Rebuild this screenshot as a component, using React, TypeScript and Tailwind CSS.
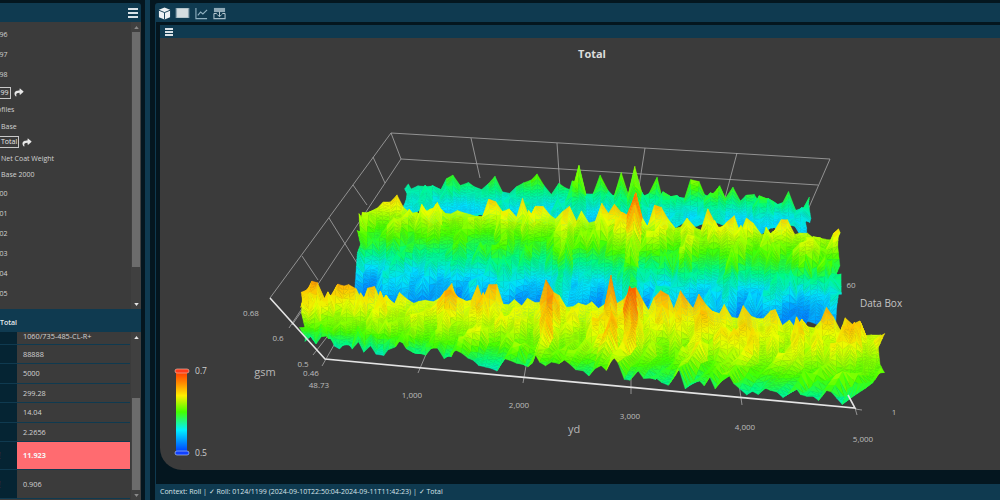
import { ReactNode } from "react";
import { FaShare } from "react-icons/fa";

// tiny seeded random so the mesh is the same on every render
function makeRandom(seed: number) {
  let s = seed;
  return () => {
    s = (s + 0x6d2b79f5) | 0;
    let t = Math.imul(s ^ (s >>> 15), 1 | s);
    t = (t + Math.imul(t ^ (t >>> 7), 61 | t)) ^ t;
    return ((t ^ (t >>> 14)) >>> 0) / 4294967296;
  };
}

const COLOR_STOPS: [number, number[]][] = [
  [0, [0, 60, 255]],
  [0.16, [0, 140, 255]],
  [0.26, [0, 225, 255]],
  [0.38, [0, 250, 130]],
  [0.48, [70, 255, 0]],
  [0.64, [235, 255, 0]],
  [0.76, [255, 190, 0]],
  [0.88, [250, 110, 0]],
  [1, [255, 40, 0]],
];

function valueColor(value: number) {
  const t = Math.min(1, Math.max(0, (value - 0.5) / 0.2));
  for (let i = 1; i < COLOR_STOPS.length; i++) {
    const [p1, c1] = COLOR_STOPS[i];
    if (t <= p1) {
      const [p0, c0] = COLOR_STOPS[i - 1];
      const k = (t - p0) / (p1 - p0);
      return `rgb(${c0.map((c, n) => Math.round(c + (c1[n] - c) * k)).join(",")})`;
    }
  }
  return "rgb(255,40,0)";
}

// [xLeft, yLeft, xRight, yRight, bow, base value, noise]
type Row = [number, number, number, number, number, number, number];

const BACK_BAND: Row[] = [
  [405, 184, 810, 207, -3, 0.575, 0.02],
  [405, 200, 808, 218, 0, 0.558, 0.018],
  [405, 220, 808, 234, 0, 0.548, 0.012],
];
const MIDDLE_BAND: Row[] = [
  [364, 207, 840, 237, -3, 0.622, 0.02],
  [362, 224, 840, 254, -2, 0.602, 0.021],
  [360, 248, 838, 276, 0, 0.578, 0.022],
  [357, 274, 837, 298, 2, 0.545, 0.02],
  [354, 306, 835, 326, 4, 0.528, 0.014],
];
const FRONT_BAND: Row[] = [
  [305, 298, 878, 338, -15, 0.63, 0.021],
  [302, 310, 882, 354, -7, 0.62, 0.021],
  [301, 324, 882, 374, 1, 0.604, 0.02],
  [304, 340, 849, 398, 6, 0.574, 0.02],
];

// sharp ridges running through the depth of the surface
const RIDGES: [number, number, number][] = [
  [0.57, 0.007, 0.062],
  [0.425, 0.007, 0.055],
  [0.535, 0.007, 0.034],
  [0.3, 0.008, 0.02],
  [0.77, 0.008, 0.024],
  [0.68, 0.008, 0.02],
];

function ridgeAt(u: number) {
  return RIDGES.reduce(
    (sum, [c, w, a]) => sum + a * Math.exp(-((u - c) * (u - c)) / (2 * w * w)),
    0
  );
}

interface Tri {
  points: string;
  fill: string;
}

interface Vert {
  x: number;
  y: number;
  v: number;
}

function lerpVert(a: Vert, b: Vert, k: number): Vert {
  return { x: a.x + (b.x - a.x) * k, y: a.y + (b.y - a.y) * k, v: a.v + (b.v - a.v) * k };
}

function buildBand(rows: Row[], seed: number, columns: number, ridgeScale: number) {
  const random = makeRandom(seed);
  const perSegment = 3;
  const rowCount = (rows.length - 1) * perSegment + 1;
  // noise stays alike over a few rows, which pulls the facets into long shards
  const grid: number[][] = [];
  const coarse = Math.ceil(rowCount / 2) + 2;
  for (let i = 0; i <= columns + rowCount; i++) {
    const column: number[] = [];
    for (let k = 0; k < coarse; k++) {
      const r = random();
      column.push(Math.pow(r, 2.2) * 2.9 - 0.62);
    }
    grid.push(column);
  }

  const verts: Vert[][] = [];
  for (let j = 0; j < rowCount; j++) {
    const pos = j / perSegment;
    const seg = Math.min(rows.length - 2, Math.floor(pos));
    const f = pos - seg;
    const a = rows[seg];
    const b = rows[seg + 1];
    const mix = (n: number) => a[n] + (b[n] - a[n]) * f;
    const k0 = Math.floor(j / 2);
    const kf = j / 2 - k0;
    const line: Vert[] = [];
    for (let i = 0; i <= columns; i++) {
      const u = i / columns;
      const column = grid[i + Math.floor(j * 0.5)];
      const n = column[k0] * (1 - kf) + column[k0 + 1] * kf + (random() - 0.5) * 0.2;
      const ridge = ridgeAt(u) * ridgeScale * (0.8 + 0.2 * (1 - j / rowCount));
      const lift = Math.min(n * mix(6) + ridge, 0.085) * 400;
      const edge = i === 0 || i === columns ? (random() - 0.5) * 8 : 0;
      line.push({
        x: mix(0) + (mix(2) - mix(0)) * u + (random() - 0.5) * 2 + edge,
        y:
          mix(1) +
          (mix(3) - mix(1)) * u +
          mix(4) * Math.sin(Math.PI * Math.min(1, u * 0.86)) -
          lift,
        v: mix(5) + n * mix(6) * 0.8 + ridge * 0.95,
      });
    }
    verts.push(line);
  }

  // each coarse quad is cut in strips, so the colour runs down a facet
  const strips = 3;
  const tris: Tri[] = [];
  const pt = (p: Vert) => `${p.x.toFixed(1)},${p.y.toFixed(1)}`;
  for (let j = 0; j < rowCount - 1; j++) {
    for (let s = 0; s < strips; s++) {
      for (let i = 0; i < columns; i++) {
        const p00 = lerpVert(verts[j][i], verts[j + 1][i], s / strips);
        const p10 = lerpVert(verts[j][i + 1], verts[j + 1][i + 1], s / strips);
        const p01 = lerpVert(verts[j][i], verts[j + 1][i], (s + 1) / strips);
        const p11 = lerpVert(verts[j][i + 1], verts[j + 1][i + 1], (s + 1) / strips);
        tris.push({
          points: `${pt(p00)} ${pt(p10)} ${pt(p01)}`,
          fill: valueColor((p00.v + p10.v + p01.v) / 3),
        });
        tris.push({
          points: `${pt(p10)} ${pt(p11)} ${pt(p01)}`,
          fill: valueColor((p10.v + p11.v + p01.v) / 3),
        });
      }
    }
  }
  return tris;
}

const MESH: Tri[] = [
  ...buildBand(BACK_BAND, 11, 58, 0.8),
  ...buildBand(MIDDLE_BAND, 23, 72, 1),
  ...buildBand(FRONT_BAND, 37, 90, 1),
];

const THIN_LINES = [
  "391,133 830,159",
  "391,133 270,298",
  "391,133 401,159",
  "401,159 818,185",
  "830,159 807,212",
  "401,159 289,328",
  "471,138 480,178",
  "557,143 560,188",
  "645,148 638,193",
  "737,153 725,198",
  "373,157 385,183",
  "353,185 367,205",
  "329,218 360,268",
  "302,256 318,280",
  "308,302 292,325",
  "330,333 313,355",
  "338,338 322,366",
  "430,345 418,373",
  "528,355 523,383",
  "631,363 631,394",
  "738,377 742,405",
  "855,408 857,415",
  "855,409 862,410",
];

const CHART_LABELS: [string, number, number][] = [
  ["0.68", 251, 316],
  ["0.6", 278, 341],
  ["0.5", 303, 367],
  ["0.46", 311, 376],
  ["48.73", 319, 388],
  ["1,000", 412, 398],
  ["2,000", 519, 408],
  ["3,000", 630, 419],
  ["4,000", 745, 430],
  ["5,000", 863, 442],
  ["1", 894, 415],
  ["60", 851, 288],
];

function SurfaceChart() {
  return (
    <svg viewBox="160 38 840 432" className="block w-[840px] h-[432px]">
      <defs>
        <linearGradient id="legend" x1="0" y1="0" x2="0" y2="1">
          <stop offset="0" stopColor="#ff3300" />
          <stop offset="0.15" stopColor="#ff8c00" />
          <stop offset="0.3" stopColor="#ffee00" />
          <stop offset="0.5" stopColor="#44ff00" />
          <stop offset="0.72" stopColor="#00f0ff" />
          <stop offset="1" stopColor="#0033ff" />
        </linearGradient>
      </defs>
      <text x="592" y="58" textAnchor="middle" fontSize="11" fontWeight="700" fill="#dcdcdc">
        Total
      </text>
      {THIN_LINES.map((points) => (
        <polyline key={points} points={points} fill="none" stroke="#a8a8a8" strokeWidth="0.8" />
      ))}
      <g className="blur-[0.6px]">
        {MESH.map((tri, i) => (
          <polygon key={i} points={tri.points} fill={tri.fill} stroke={tri.fill} strokeWidth="0.35" />
        ))}
      </g>
      <polyline
        points="270,298 325,359 855,408 848,395"
        fill="none"
        stroke="#e4e4e4"
        strokeWidth="1.6"
      />
      {CHART_LABELS.map(([label, x, y]) => (
        <text key={label} x={x} y={y} textAnchor="middle" fontSize="8" fill="#bdbdbd">
          {label}
        </text>
      ))}
      <text x="265" y="376" textAnchor="middle" fontSize="11" fill="#b8b8b8">
        gsm
      </text>
      <text x="574" y="433" textAnchor="middle" fontSize="11" fill="#b8b8b8">
        yd
      </text>
      <text x="881" y="307" textAnchor="middle" fontSize="10" fill="#c4c4c4">
        Data Box
      </text>
      <rect x="176" y="371" width="11" height="82" fill="url(#legend)" />
      <rect x="175" y="369" width="14" height="4" rx="2" fill="#ff3b1a" stroke="#e8b0a0" strokeWidth="0.7" />
      <rect x="175" y="451" width="14" height="4" rx="2" fill="#1040ff" stroke="#a8c0f0" strokeWidth="0.7" />
      <text x="201" y="374" textAnchor="middle" fontSize="8.5" fill="#cfcfcf">
        0.7
      </text>
      <text x="201" y="456" textAnchor="middle" fontSize="8.5" fill="#cfcfcf">
        0.5
      </text>
    </svg>
  );
}

function Hamburger({ className }: { className: string }) {
  return (
    <div className={`flex flex-col justify-between ${className}`}>
      <span className="block h-[2px] bg-[#d9e2e7]" />
      <span className="block h-[2px] bg-[#d9e2e7]" />
      <span className="block h-[2px] bg-[#d9e2e7]" />
    </div>
  );
}

function Arrow({ up, light }: { up?: boolean; light?: boolean }) {
  return (
    <div className="h-[10px] flex items-center justify-center shrink-0">
      <svg viewBox="0 0 6 4" className="w-[5px] h-[3px]">
        <polygon
          points={up ? "0,4 6,4 3,0" : "0,0 6,0 3,4"}
          fill={light ? "#e6e6e6" : "#8a8a8a"}
        />
      </svg>
    </div>
  );
}

const TREE_ROWS: {
  text: string;
  height: string;
  shift: string;
  boxed?: boolean;
}[] = [
  { text: "0124/1196", height: "h-[20px]", shift: "-ml-[27px]" },
  { text: "0124/1197", height: "h-[20px]", shift: "-ml-[27px]" },
  { text: "0124/1198", height: "h-[20px]", shift: "-ml-[27px]" },
  { text: "0124/1199", height: "h-[17px]", shift: "-ml-[28px]", boxed: true },
  { text: "Profiles", height: "h-[17px]", shift: "-ml-[10px]" },
  { text: "Base", height: "h-[16px]", shift: "ml-[1px]" },
  { text: "Total", height: "h-[16px]", shift: "-ml-[1px]", boxed: true },
  { text: "Net Coat Weight", height: "h-[16px]", shift: "ml-[1px]" },
  { text: "Base 2000", height: "h-[17px]", shift: "ml-[1px]" },
  { text: "0125/1200", height: "h-[20px]", shift: "-ml-[27px]" },
  { text: "0125/1201", height: "h-[20px]", shift: "-ml-[27px]" },
  { text: "0125/1202", height: "h-[20px]", shift: "-ml-[27px]" },
  { text: "0125/1203", height: "h-[20px]", shift: "-ml-[27px]" },
  { text: "0125/1204", height: "h-[20px]", shift: "-ml-[27px]" },
  { text: "0125/1205", height: "h-[20px]", shift: "-ml-[27px]" },
];

const TABLE_ROWS: { value: string; height: string; align: string; alert?: boolean; warn?: boolean }[] = [
  { value: "1060/735-485-CL-R+", height: "h-[13px]", align: "items-start" },
  { value: "88888", height: "h-[19px]", align: "items-center" },
  { value: "5000", height: "h-[20px]", align: "items-center" },
  { value: "299.28", height: "h-[19px]", align: "items-center" },
  { value: "14.04", height: "h-[20px]", align: "items-center" },
  { value: "2.2656", height: "h-[19px]", align: "items-center" },
  { value: "11.923", height: "h-[28px]", align: "items-center", alert: true, warn: true },
  { value: "0.906", height: "h-[29px]", align: "items-center", warn: true },
];

function LeftPanel() {
  return (
    <div className="w-[141px] shrink-0 flex flex-col pt-[3px]">
      <div className="h-[19px] shrink-0 bg-[#0f3a50] rounded-tr-[3px] flex items-center justify-end pr-[3px]">
        <Hamburger className="w-[10px] h-[10px]" />
      </div>
      <div className="h-[287px] shrink-0 bg-[#3b3b3b] flex overflow-hidden">
        <div className="flex-1 pt-[2px] overflow-hidden text-[7px] text-[#d2d2d2]">
          {TREE_ROWS.map((row) => (
            <div key={row.text} className={`${row.height} flex items-center whitespace-nowrap`}>
              <div className={`${row.shift} flex items-center`}>
                <span
                  className={
                    row.boxed
                      ? "border border-[#c9c9c9] px-[1px] leading-[10px] text-[#e8e8e8]"
                      : "leading-[11px]"
                  }
                >
                  {row.text}
                </span>
                {row.boxed && <FaShare className="w-[10px] h-[9px] ml-[3px] shrink-0 text-[#e8e8e8]" />}
              </div>
            </div>
          ))}
        </div>
        <div className="w-[10px] shrink-0 bg-[#404040] flex flex-col">
          <Arrow up />
          <div className="h-[235px] mx-[1px] bg-[#6c6c6c] shrink-0" />
          <div className="flex-1" />
          <Arrow light />
        </div>
      </div>
      <div className="h-[23px] shrink-0 bg-[#0f3a50] flex items-end pb-[3px] text-[7px] font-semibold text-[#e6ecef]">
        <span className="leading-[12px]">Total</span>
      </div>
      <div className="flex-1 flex overflow-hidden bg-[#3b3b3b] text-[7.3px] text-[#d2d2d2]">
        <div className="flex-1 min-w-0">
          {TABLE_ROWS.map((row) => (
            <div key={row.value} className={`${row.height} flex border-b border-[#0f3a50]`}>
              <div className="w-[17px] h-full shrink-0 bg-[#052433] overflow-hidden flex items-center text-[9px] text-[#ff5a5a]">
                {row.warn ? <span className="-ml-[2px] leading-none">!</span> : null}
              </div>
              <div
                className={`flex-1 h-full flex px-[6px] ${row.align} ${
                  row.alert ? "bg-[#ff6b70] font-bold text-[#f6f6f6]" : ""
                }`}
              >
                <span className={row.align === "items-start" ? "leading-[8px]" : "leading-[11px]"}>
                  {row.value}
                </span>
              </div>
            </div>
          ))}
        </div>
        <div className="w-[10px] ml-[1px] shrink-0 bg-[#404040] flex flex-col">
          <Arrow up light />
          <div className="h-[56px] shrink-0" />
          <div className="h-[92px] mx-[1px] shrink-0 bg-[#6c6c6c]" />
          <Arrow />
        </div>
      </div>
    </div>
  );
}

function ToolIcon({ children, className }: { children: ReactNode; className: string }) {
  return (
    <svg viewBox="0 0 14 14" className={className}>
      {children}
    </svg>
  );
}

function Toolbar() {
  return (
    <div className="h-[19px] shrink-0 bg-[#0f3a50] rounded-tl-[3px] flex items-center pl-[3px] pt-[1px]">
      <ToolIcon className="w-[13px] h-[13px]">
        <path d="M7 .5l6 2.500v8L7 13.500 1 11V3z" fill="#eef2f4" />
        <path d="M1 3.500l6 2.500 6-2.500M7 6v7.500" fill="none" stroke="#0f3a50" strokeWidth="1" />
      </ToolIcon>
      <svg viewBox="0 0 15 11" className="w-[15px] h-[10px] ml-[4px]">
        <rect x="0" y="0" width="15" height="11" fill="#8ea6b2" />
        <rect x="1.500" y="0.500" width="12" height="10" fill="#d4dcdf" />
      </svg>
      <ToolIcon className="w-[13px] h-[13px] ml-[5px]">
        <path d="M1 1v11.500h12" fill="none" stroke="#8fb0c0" strokeWidth="1.200" />
        <path d="M3 9l3-3.500 2.500 2L13 3" fill="none" stroke="#8fb0c0" strokeWidth="1.200" />
      </ToolIcon>
      <ToolIcon className="w-[13px] h-[13px] ml-[5px]">
        <rect x="1" y="1" width="12" height="4.500" fill="#8fa9b6" />
        <path d="M1 7v5.500h12V7" fill="none" stroke="#a5bcc7" strokeWidth="1.200" />
        <path d="M7 5v5M4.500 8l2.500 2.500L9.500 8M1 7h3M10 7h3" fill="none" stroke="#c3d2d9" strokeWidth="1" />
      </ToolIcon>
    </div>
  );
}

function RightPanel() {
  return (
    <div className="flex-1 min-w-0 flex flex-col pt-[3px]">
      <Toolbar />
      <div className="flex-1 min-h-0 flex flex-col border-l border-[#0f3a50] pt-[3px] pl-[4px]">
        <div className="h-[13px] shrink-0 bg-[#0f3a50] flex items-center pl-[5px]">
          <Hamburger className="w-[8px] h-[8px]" />
        </div>
        <div className="h-[432px] shrink-0 bg-[#3b3b3b] rounded-bl-[22px] overflow-hidden">
          <SurfaceChart />
        </div>
      </div>
      <div className="h-[16px] shrink-0 bg-[#0f3a50] flex items-center pl-[5px] text-[7px] text-[#d9e4e9] whitespace-nowrap">
        Context: Roll | ✓ Roll: 0124/1199 (2024-09-10T22:50:04-2024-09-11T11:42:23) | ✓ Total
      </div>
    </div>
  );
}

export default function App() {
  return (
    <div className="w-[1000px] h-[500px] flex overflow-hidden bg-[#04161f] font-['Open_Sans','Noto_Sans',sans-serif]">
      <LeftPanel />
      <div className="w-[4px] shrink-0" />
      <div className="w-[5px] shrink-0 bg-[#0f3a50]" />
      <div className="w-[5px] shrink-0" />
      <RightPanel />
    </div>
  );
}
